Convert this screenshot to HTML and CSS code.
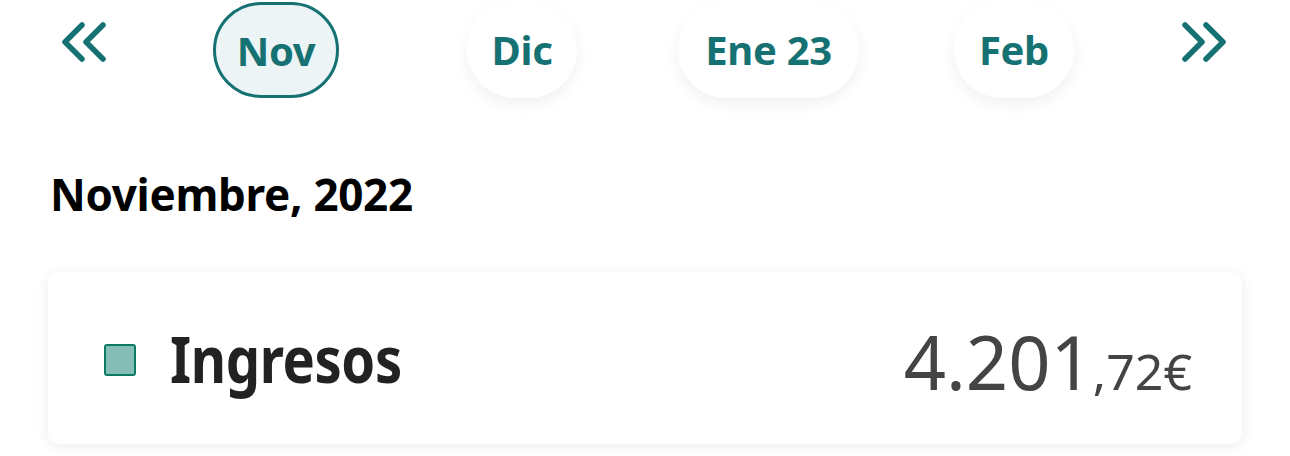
FILE: index.html
```html
<!DOCTYPE html>
<html lang="es">
<head>
<meta charset="utf-8">
<link rel="stylesheet" href="styles.css">
</head>
<body>
<div class="page">
  <nav class="months">
    <button class="arrow prev" aria-label="Anterior">
      <svg width="48" height="42" viewBox="0 0 48 42"><path d="M22 4 L5 21 L22 38 M43 4 L26 21 L43 38" fill="none" stroke="#167173" stroke-width="5.5" stroke-linecap="round" stroke-linejoin="round"/></svg>
    </button>
    <div class="pill active">Nov</div>
    <div class="pill dic">Dic</div>
    <div class="pill ene">Ene 23</div>
    <div class="pill feb">Feb</div>
    <button class="arrow next" aria-label="Siguiente">
      <svg width="48" height="42" viewBox="0 0 48 42"><path d="M5 4 L22 21 L5 38 M26 4 L43 21 L26 38" fill="none" stroke="#167173" stroke-width="5.5" stroke-linecap="round" stroke-linejoin="round"/></svg>
    </button>
  </nav>
  <h2 class="title">Noviembre, 2022</h2>
  <section class="card">
    <span class="swatch"></span>
    <span class="label"><span class="label-text">Ingresos</span></span>
    <span class="amount">4.201<span class="dec">,72€</span></span>
  </section>
</div>
</body>
</html>
```

FILE: styles.css
```css
* { box-sizing: border-box; }
html, body { margin: 0; padding: 0; background: #fff; }
body { font-family: "Noto Sans", "Open Sans", sans-serif; width: 1290px; height: 456px; overflow: hidden; }
.page { padding: 0 48px 0 48px; }
.months {
  display: flex;
  align-items: center;
  height: 98px;
}
.arrow {
  background: none; border: 0; padding: 0; margin: 0;
  width: 48px; height: 42px; display: flex; flex: none;
}
.prev { margin-left: 12px; margin-top: -14px; margin-right: 105px; }
.next { margin-left: 106px; margin-top: -14px; }
.pill {
  flex: none;
  height: 97px;
  border-radius: 48px;
  background: #fff;
  color: #167173;
  font-weight: 700;
  font-size: 40px;
  display: flex; align-items: center; justify-content: center;
  padding: 0;
  box-shadow: 0 6px 16px rgba(0,0,0,0.06);
  letter-spacing: -0.3px;
}
.active {
  background: #ecf4f5;
  border: 3px solid #167173;
  box-shadow: none;
  height: 96px;
  margin-top: 2px;
  width: 126px;
  margin-right: 128px;
}
.dic { width: 110px; margin-right: 101px; }
.ene { width: 181px; margin-right: 95px; }
.feb { width: 120px; }
.title {
  margin: 70px 0 0 2px;
  font-size: 44px;
  font-weight: 700;
  color: #000;
  line-height: 52px;
  letter-spacing: -0.3px;
}
.card {
  margin-top: 52px;
  height: 172px;
  border-radius: 10px;
  background: #fff;
  box-shadow: 0 2px 14px rgba(0,0,0,0.08);
  display: flex; align-items: center;
  padding: 0 50px 0 56px;
}
.swatch {
  flex: none;
  width: 32px; height: 32px;
  background: #84bdb3;
  border: 2px solid #0e7a66;
  border-radius: 3px;
  margin-right: 34px;
  margin-top: 4px;
}
.label {
  flex: 1;
  font-size: 64px; font-weight: 700; color: #222;
  letter-spacing: -0.5px;
}
.label-text { display: inline-block; transform: scaleX(0.85); transform-origin: left center; }
.amount { font-size: 74px; color: #444; font-weight: 400; margin-top: 6px; }
.dec { font-size: 50px; }
```
